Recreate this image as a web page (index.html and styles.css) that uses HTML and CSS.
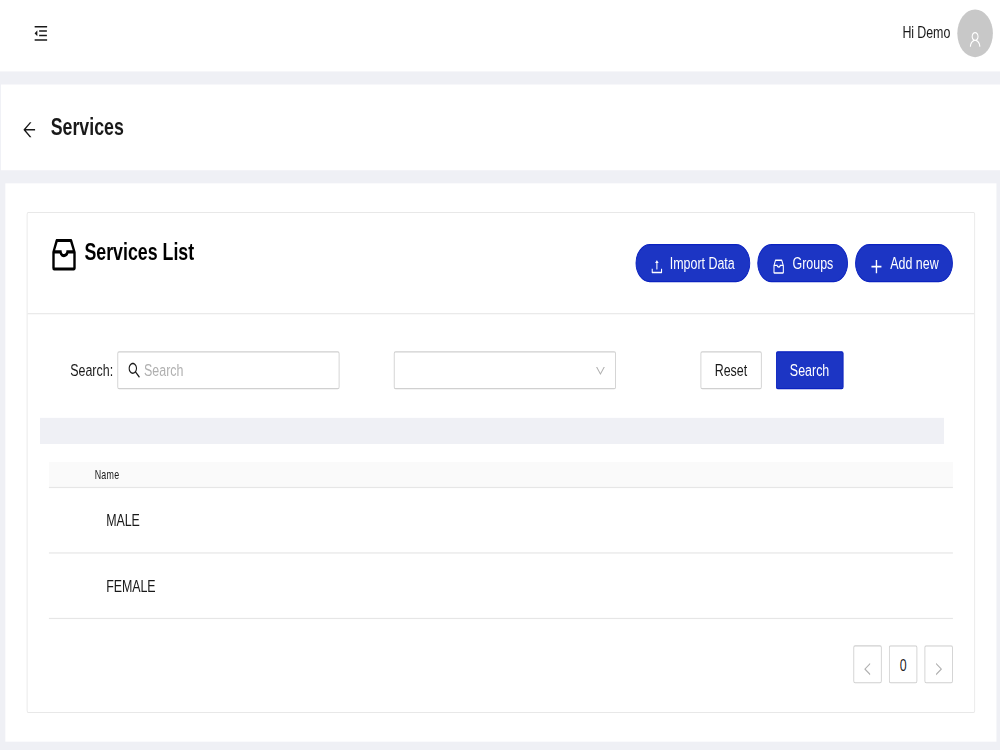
FILE: index.html
```
<!DOCTYPE html>
<html lang="en">
<head>
    <meta charset="UTF-8">
    <meta name="viewport" content="width=device-width, initial-scale=1.0">
    <title>Services</title>
    <link rel="stylesheet" href="styles.css">
</head>
<body>
    <div class="page">
        <!-- Top Bar -->
        <header class="topbar">
            <svg class="icon menu-icon" viewBox="0 0 1024 1024"><path d="M408 442h480c4.400 0 8-3.600 8-8v-56c0-4.400-3.600-8-8-8H408c-4.400 0-8 3.600-8 8v56c0 4.400 3.600 8 8 8zm-8 204c0 4.400 3.600 8 8 8h480c4.400 0 8-3.600 8-8v-56c0-4.400-3.600-8-8-8H408c-4.400 0-8 3.600-8 8v56zm504-486H120c-4.400 0-8 3.600-8 8v56c0 4.400 3.600 8 8 8h784c4.400 0 8-3.600 8-8v-56c0-4.400-3.600-8-8-8zm0 632H120c-4.400 0-8 3.600-8 8v56c0 4.400 3.600 8 8 8h784c4.400 0 8-3.600 8-8v-56c0-4.400-3.600-8-8-8zM115.400 518.900L271.700 642c5.800 4.600 14.400.5 14.400-6.900V388.900c0-7.400-8.500-11.500-14.400-6.900L115.400 505.100a8.740 8.740 0 0 0 0 13.800z"/></svg>
            <div class="user">
                <span>Hi Demo</span>
                <div class="avatar">
                    <svg class="icon" viewBox="0 0 1024 1024"><path d="M858.500 763.600a374 374 0 0 0-80.600-119.500 375.630 375.630 0 0 0-119.500-80.600c-.4-.2-.8-.3-1.200-.5C719.500 518 760 444.700 760 362c0-137-111-248-248-248S264 225 264 362c0 82.700 40.500 156 102.800 201.100-.4.2-.8.3-1.200.5-44.800 18.900-85 46-119.500 80.600a375.630 375.630 0 0 0-80.600 119.500A371.700 371.700 0 0 0 136 901.800a8 8 0 0 0 8 8.200h60c4.400 0 7.900-3.500 8-7.800 2-77.200 33-149.500 87.800-204.300 56.700-56.700 132-87.900 212.200-87.900s155.500 31.200 212.200 87.900C779 752.700 810 825 812 902.200c.1 4.400 3.600 7.800 8 7.800h60a8 8 0 0 0 8-8.200c-1-47.800-10.900-94.300-29.500-138.200zM512 534c-45.900 0-89.100-17.900-121.600-50.400S340 407.900 340 362c0-45.900 17.900-89.100 50.400-121.600S466.100 190 512 190s89.100 17.900 121.600 50.400S684 316.100 684 362c0 45.900-17.900 89.100-50.400 121.600S557.900 534 512 534z"/></svg>
                </div>
            </div>
        </header>

        <!-- Page Header -->
        <div class="page-header">
            <svg class="icon back-icon" viewBox="0 0 1024 1024"><path d="M872 474H286.900l350.200-304c5.600-4.900 2.200-14-5.200-14h-88.500c-3.900 0-7.600 1.400-10.500 3.900L155 487.800a31.960 31.960 0 0 0 0 48.300L535.100 866c1.500 1.300 3.300 2 5.200 2h91.500c7.400 0 10.800-9.200 5.200-14L286.900 550H872c4.400 0 8-3.600 8-8v-60c0-4.400-3.600-8-8-8z"/></svg>
            <h1>Services</h1>
        </div>

        <main class="content">
            <div class="card">
                <div class="card-head">
                    <div class="card-title">
                        <svg class="icon" viewBox="0 0 1024 1024"><use href="#inbox"/></svg>
                        <h2>Services List</h2>
                    </div>
                    <div class="actions">
                        <button class="btn btn-primary btn-round btn-import">
                            <svg class="icon" viewBox="0 0 1024 1024"><path d="M400 317.700h73.900V656c0 4.400 3.600 8 8 8h60c4.400 0 8-3.600 8-8V317.700H624c6.700 0 10.400-7.700 6.300-12.900L518.300 163a8 8 0 0 0-12.600 0l-112 141.700c-4.100 5.300-.4 13 6.300 13zM878 626h-60c-4.400 0-8 3.600-8 8v154H214V634c0-4.400-3.600-8-8-8h-60c-4.400 0-8 3.600-8 8v198c0 17.700 14.300 32 32 32h684c17.700 0 32-14.300 32-32V634c0-4.400-3.600-8-8-8z"/></svg>
                            <span>Import Data</span>
                        </button>
                        <button class="btn btn-primary btn-round">
                            <svg class="icon" viewBox="0 0 1024 1024"><path id="inbox" d="M885.200 446.300l-.2-.8-112.200-285.100c-5-16.100-19.900-27.200-36.800-27.200H281.200c-17 0-32.100 11.300-36.900 27.600L139.400 443l-.3.7-.2.8c-1.300 4.900-1.700 9.900-1 14.800-.1 1.600-.2 3.200-.2 4.800V830a60.900 60.900 0 0 0 60.800 60.800h627.200c33.500 0 60.800-27.300 60.900-60.800V464.100c0-1.300 0-2.600-.1-3.700.4-4.900 0-9.600-1.300-14.100zm-295.800-43l-.3 15.700c-.8 44.900-31.800 75.100-77.100 75.100-22.100 0-41.100-7.100-54.800-20.600S436 441.200 435.600 419l-.3-15.700H229.500L309 210h399.200l81.700 193.300H589.400zm-375 76.800h157.300c24.300 57.100 76 90.800 140.400 90.800 33.700 0 65-9.400 90.300-27.200 22.200-15.600 39.500-37.400 50.700-63.600h156.500V814H214.400V480.100z"/></svg>
                            <span>Groups</span>
                        </button>
                        <button class="btn btn-primary btn-round">
                            <svg class="icon" viewBox="0 0 1024 1024"><path d="M462 152h100v720H462zM152 467h720v90H152z"/></svg>
                            <span>Add new</span>
                        </button>
                    </div>
                </div>

                <div class="card-body">
                    <!-- Filters -->
                    <div class="filters">
                        <label for="search">Search:</label>
                        <div class="input">
                            <svg class="icon" viewBox="0 0 1024 1024"><path d="M909.600 854.500L649.900 594.800C690.200 542.700 712 479 712 412c0-80.200-31.300-155.400-87.900-212.100-56.600-56.700-132-87.900-212.100-87.900s-155.500 31.300-212.100 87.900C143.200 256.500 112 331.800 112 412c0 80.100 31.300 155.500 87.900 212.100C256.500 680.800 331.800 712 412 712c67 0 130.600-21.800 182.700-62l259.700 259.600a8.200 8.200 0 0 0 11.600 0l43.600-43.500a8.200 8.200 0 0 0 0-11.600zM570.400 570.400C528 612.700 471.800 636 412 636s-116-23.300-158.400-65.600C211.300 528 188 471.800 188 412s23.300-116.100 65.600-158.400C296 211.300 352.200 188 412 188s116.100 23.200 158.400 65.600S636 352.200 636 412s-23.300 116.100-65.600 158.400z"/></svg>
                            <input type="text" id="search" placeholder="Search">
                        </div>
                        <div class="select">
                            <svg class="icon" viewBox="0 0 1024 1024"><path d="M884 256h-75c-5.100 0-9.900 2.500-12.900 6.600L512 654.200 227.900 262.600c-3-4.100-7.800-6.600-12.900-6.600h-75c-6.500 0-10.300 7.400-6.500 12.700l352.600 486.100c12.800 17.600 39 17.600 51.700 0l352.600-486.100c3.900-5.300.1-12.700-6.400-12.700z"/></svg>
                        </div>
                        <button class="btn">Reset</button>
                        <button class="btn btn-primary">Search</button>
                    </div>

                    <div class="strip"></div>

                    <!-- Services Table -->
                    <table>
                        <thead>
                            <tr><th>Name</th></tr>
                        </thead>
                        <tbody>
                            <tr><td>MALE</td></tr>
                            <tr><td>FEMALE</td></tr>
                        </tbody>
                    </table>

                    <div class="pagination">
                        <button class="page-btn"><svg class="icon" viewBox="0 0 1024 1024"><path d="M724 218.300V141c0-6.700-7.700-10.400-12.900-6.300L260.300 486.800a31.860 31.860 0 0 0 0 50.300l450.800 352.100c5.300 4.100 12.900.4 12.900-6.300v-77.300c0-4.900-2.300-9.600-6.100-12.600l-360-281 360-281.100c3.800-3 6.100-7.700 6.100-12.600z"/></svg></button>
                        <button class="page-btn"><span>0</span></button>
                        <button class="page-btn"><svg class="icon" viewBox="0 0 1024 1024"><path d="M765.700 486.800L314.900 134.700A7.970 7.970 0 0 0 302 141v77.300c0 4.900 2.300 9.600 6.100 12.600l360 281.100-360 281.100c-3.900 3-6.100 7.700-6.100 12.600V883c0 6.700 7.700 10.400 12.900 6.300l450.800-352.100a31.960 31.960 0 0 0 0-50.400z"/></svg></button>
                    </div>
                </div>
            </div>
        </main>
    </div>
</body>
</html>
```
FILE: styles.css
```
* {
    box-sizing: border-box;
}
html {
    overflow: hidden;
}
body {
    margin: 0;
    height: 750px;
    overflow: hidden;
    background: #eff0f5;
}
/* 1125x630 layout stretched over the window */
.page {
    width: 1125px;
    height: 630px;
    margin-right: -125px;
    transform: scale(0.888888, 1.190476);
    transform-origin: 0 0;
    font-family: "Liberation Sans", Arial, sans-serif;
    font-size: 14px;
    line-height: 22px;
    color: rgba(0,0,0,0.9);
}
h1, h2 {
    margin: 0;
    font-size: 20px;
    line-height: 28px;
    font-weight: bold;
}
.icon {
    width: 14px;
    height: 14px;
    fill: currentColor;
    flex: none;
}
.topbar {
    height: 60px;
    padding: 0 8px 4px 37px;
    background: #fff;
    display: flex;
    align-items: center;
    justify-content: space-between;
}
.menu-icon {
    width: 18px;
    height: 18px;
}
.user {
    display: flex;
    align-items: center;
    gap: 8px;
}
.user span {
    margin-bottom: 2px;
    letter-spacing: -0.1px;
}
.avatar {
    width: 40px;
    height: 40px;
    border-radius: 50%;
    background: #c8c8c8;
    color: #fff;
    display: flex;
    align-items: center;
    justify-content: center;
}
.avatar .icon {
    width: 16px;
    height: 16px;
    margin-top: 9px;
}
.page-header {
    height: 72.500px;
    margin: 10.500px 0 0 1px;
    padding: 0 23px;
    background: #fff;
    display: flex;
    align-items: center;
    gap: 15px;
}
.page-header h1 {
    margin-bottom: 1px;
}
.back-icon {
    width: 18px;
    height: 18px;
    margin-top: 5px;
}
.content {
    height: 469px;
    margin: 11px 4px 0 6px;
    padding: 24px;
    background: #fff;
}
.card {
    width: 1067px;
    height: 421px;
    border: 1px solid #e8e8e8;
    border-radius: 2px;
}
.card-head {
    height: 85px;
    padding: 0 24px 0 23px;
    border-bottom: 1px solid #e8e8e8;
    display: flex;
    align-items: center;
    justify-content: space-between;
}
.card-title {
    display: flex;
    align-items: center;
    gap: 5px;
    margin-bottom: 15px;
    color: #000;
}
.card-title .icon {
    width: 36px;
    height: 36px;
}
.card-title h2 {
    margin-bottom: 6px;
}
.actions {
    display: flex;
    gap: 8px;
}
.btn {
    height: 32px;
    padding: 0 15px;
    border: 1px solid #d0d0d0;
    border-radius: 2px;
    background: #fff;
    font: inherit;
    color: inherit;
    display: flex;
    align-items: center;
    gap: 8px;
    cursor: pointer;
}
.btn-primary {
    background: #1c35c4;
    border-color: #0b22c0;
    color: #fff;
}
.btn-round {
    border-radius: 16px;
}
.btn-round .icon {
    width: 16px;
    height: 16px;
    margin-top: 6px;
}
.btn-import {
    padding-right: 16px;
    gap: 6.500px;
}
.card-body {
    padding: 31px 24px 0;
}
.filters {
    display: flex;
    align-items: center;
    padding-left: 24px;
}
.filters label {
    width: 53px;
}
.input, .select {
    width: 250px;
    height: 32px;
    padding: 0 10px;
    border: 1px solid #d0d0d0;
    border-radius: 2px;
    display: flex;
    align-items: center;
}
.input .icon {
    width: 16px;
    height: 16px;
}
.input input {
    width: 200px;
    margin-left: 3px;
    padding: 0;
    border: none;
    outline: none;
    font: inherit;
}
.input input::placeholder {
    color: #b0b0b0;
}
.select {
    margin: 0 95px 0 61px;
    justify-content: flex-end;
}
.select .icon {
    width: 13px;
    height: 13px;
    color: #b0b0b0;
}
.filters .btn-primary {
    margin-left: 16px;
}
.strip {
    width: 1017px;
    height: 22px;
    margin: 24px 0 15px -10px;
    background: #eff0f5;
}
table {
    width: 100%;
    border-collapse: separate;
    border-spacing: 0;
}
th, td {
    text-align: left;
    border-bottom: 1px solid #e6e6e6;
}
th {
    height: 22px;
    padding: 0 0 0 51.500px;
    background: #fafafa;
    font-size: 10px;
    line-height: 21px;
    font-weight: normal;
    letter-spacing: 0.3px;
}
td {
    height: 55px;
    padding: 0 0 0 64.500px;
    letter-spacing: -0.1px;
}
.pagination {
    display: flex;
    justify-content: flex-end;
    gap: 8px;
    margin-top: 22px;
}
.page-btn {
    width: 32px;
    height: 32px;
    padding: 0;
    border: 1px solid #d0d0d0;
    border-radius: 2px;
    background: #fff;
    font: inherit;
    color: inherit;
    display: flex;
    align-items: center;
    justify-content: center;
}
.page-btn span {
    margin-top: 2px;
}
.page-btn .icon {
    width: 14px;
    height: 14px;
    margin-top: 7px;
    color: #b0b0b0;
}
```
